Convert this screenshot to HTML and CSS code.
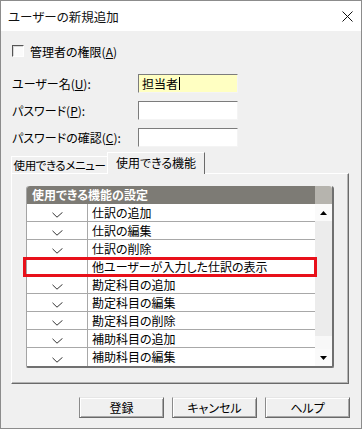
FILE: index.html
```html
<!DOCTYPE html>
<html lang="ja">
<head>
<meta charset="utf-8">
<title>ユーザーの新規追加</title>
<link rel="stylesheet" href="styles.css">
</head>
<body>
<div class="window">
  <div class="titlebar">
    <span class="title">ユーザーの新規追加</span>
    <svg class="close" width="11" height="11" viewBox="0 0 11 11"><path d="M0.5 0.5L10.5 10.5M10.5 0.5L0.5 10.5" stroke="#111" stroke-width="1" fill="none"/></svg>
  </div>
  <div class="body">
    <div class="check-row"><span class="checkbox"></span><span>管理者の権限(<u>A</u>)</span></div>
    <div class="form">
      <div class="field"><span class="label">ユーザー名(<u>U</u>):</span><div class="input active">担当者<span class="caret"></span></div></div>
      <div class="field"><span class="label">パスワード(<u>P</u>):</span><div class="input"></div></div>
      <div class="field"><span class="label">パスワードの確認(<u>C</u>):</span><div class="input"></div></div>
    </div>
    <div class="tabbox">
      <div class="tabs">
        <div class="tab">使用できるメニュー</div>
        <div class="tab active">使用できる機能</div>
      </div>
      <div class="panel">
        <div class="grid">
          <div class="grid-main">
            <div class="grid-head">使用できる機能の設定</div>
            <div class="row"><div class="c-check"><svg width="11" height="6" viewBox="0 0 11 6"><polyline points="0.5,0.8 5,5.2 10.5,0.3" fill="none" stroke="#333" stroke-width="1"/></svg></div><div class="c-name">仕訳の追加</div></div>
            <div class="row"><div class="c-check"><svg width="11" height="6" viewBox="0 0 11 6"><polyline points="0.5,0.8 5,5.2 10.5,0.3" fill="none" stroke="#333" stroke-width="1"/></svg></div><div class="c-name">仕訳の編集</div></div>
            <div class="row"><div class="c-check"><svg width="11" height="6" viewBox="0 0 11 6"><polyline points="0.5,0.8 5,5.2 10.5,0.3" fill="none" stroke="#333" stroke-width="1"/></svg></div><div class="c-name">仕訳の削除</div></div>
            <div class="row"><div class="c-check"></div><div class="c-name">他ユーザーが入力した仕訳の表示</div></div>
            <div class="row"><div class="c-check"><svg width="11" height="6" viewBox="0 0 11 6"><polyline points="0.5,0.8 5,5.2 10.5,0.3" fill="none" stroke="#333" stroke-width="1"/></svg></div><div class="c-name">勘定科目の追加</div></div>
            <div class="row"><div class="c-check"><svg width="11" height="6" viewBox="0 0 11 6"><polyline points="0.5,0.8 5,5.2 10.5,0.3" fill="none" stroke="#333" stroke-width="1"/></svg></div><div class="c-name">勘定科目の編集</div></div>
            <div class="row"><div class="c-check"><svg width="11" height="6" viewBox="0 0 11 6"><polyline points="0.5,0.8 5,5.2 10.5,0.3" fill="none" stroke="#333" stroke-width="1"/></svg></div><div class="c-name">勘定科目の削除</div></div>
            <div class="row"><div class="c-check"><svg width="11" height="6" viewBox="0 0 11 6"><polyline points="0.5,0.8 5,5.2 10.5,0.3" fill="none" stroke="#333" stroke-width="1"/></svg></div><div class="c-name">補助科目の追加</div></div>
            <div class="row"><div class="c-check"><svg width="11" height="6" viewBox="0 0 11 6"><polyline points="0.5,0.8 5,5.2 10.5,0.3" fill="none" stroke="#333" stroke-width="1"/></svg></div><div class="c-name">補助科目の編集</div></div>
          </div>
          <div class="scrollbar">
            <div class="sb-corner"></div>
            <div class="sb-btn"><svg width="7" height="4" viewBox="0 0 7 4"><polygon points="0,4 3.5,0 7,4" fill="#000"/></svg></div>
            <div class="sb-track"></div>
            <div class="sb-thumb"></div>
            <div class="sb-btn"><svg width="7" height="4" viewBox="0 0 7 4"><polygon points="0,0 7,0 3.5,4" fill="#000"/></svg></div>
          </div>
          <div class="highlight"></div>
        </div>
      </div>
    </div>
    <div class="buttons">
      <div class="btn">登録</div>
      <div class="btn">キャンセル</div>
      <div class="btn">ヘルプ</div>
    </div>
  </div>
</div>
</body>
</html>
```
FILE: styles.css
```css
* { box-sizing: border-box; margin: 0; padding: 0; }
body {
  margin: 0;
  font-family: "Noto Sans CJK JP", "Noto Sans", sans-serif;
  font-size: 12px;
  color: #000;
  font-feature-settings: "palt";
  background: #fff;
}
.window {
  width: 362px;
  height: 429px;
  border: 1px solid #8c8c8c;
  background: #f0f0f0;
  display: flex;
  flex-direction: column;
}
.titlebar {
  height: 30px;
  background: #fff;
  display: flex;
  align-items: center;
  justify-content: space-between;
  padding: 0 8px 0 7px;
  font-size: 12.5px;
  color: #111;
}
.body {
  padding: 11px 11px 0 11px;
}
.check-row {
  height: 18px;
  display: flex;
  align-items: center;
  gap: 6px;
}
.checkbox {
  width: 12px;
  height: 12px;
  border: 1px solid;
  border-color: #555 #fff #fff #555;
  box-shadow: inset 1px 1px 0 #d8d8d8;
  background: #fbfbfb;
}
.form {
  margin-top: 14px;
  display: flex;
  flex-direction: column;
  gap: 8px;
}
.field {
  display: flex;
  align-items: center;
  height: 19px;
}
.label {
  width: 126px;
  white-space: nowrap;
}
.input {
  width: 100px;
  height: 19px;
  background: #fff;
  border: 1px solid;
  border-color: #7c7c7c #f4f4f4 #f4f4f4 #7c7c7c;
  display: flex;
  align-items: center;
  padding-left: 3px;
  line-height: 17px;
}
.input.active {
  background: #ffffc2;
}
.caret {
  display: inline-block;
  width: 1px;
  height: 13px;
  background: #000;
  margin-left: 1px;
}
.tabbox {
  margin-top: 5px;
  margin-left: -1px;
}
.tabs {
  display: flex;
  align-items: flex-end;
  height: 21px;
}
.tab {
  width: 96px;
  height: 17px;
  border-left: 1px solid #fff;
  border-top: 1px solid #fff;
  text-align: center;
  line-height: 16px;
  white-space: nowrap;
  font-size: 11.5px;
  letter-spacing: -0.4px;
}
.tab.active {
  width: 98px;
  height: 22px;
  margin-bottom: -1px;
  position: relative;
  z-index: 1;
  background: #f0f0f0;
  border-right: 1px solid #6a6a6a;
  line-height: 19px;
  font-size: 12px;
  letter-spacing: 0;
}
.panel {
  width: 338px;
  height: 211px;
  border: 1px solid;
  border-color: #fff #6a6a6a #6a6a6a #fff;
  box-shadow: inset -1px -1px 0 #b4b4b4;
  padding: 12px 0 0 14px;
}
.grid {
  position: relative;
  width: 308px;
  display: flex;
  border-left: 1px solid #a4a4a4;
  border-right: 2px solid #707070;
  border-bottom: 2px solid #707070;
  border-radius: 3px 3px 2px 2px;
  background: #fff;
}
.grid-main {
  flex: 1;
  display: flex;
  flex-direction: column;
}
.grid-head {
  height: 18px;
  background: #7d7b75;
  color: #fff;
  font-weight: bold;
  padding-left: 5px;
  line-height: 18px;
  border-top-left-radius: 3px;
}
.row {
  height: 18px;
  display: flex;
  border-bottom: 1px solid #a8a8a8;
}
.row:last-child { border-bottom: none; }
.c-check {
  width: 61px;
  border-right: 1px solid #a8a8a8;
  display: flex;
  justify-content: center;
  align-items: flex-end;
  padding-bottom: 3px;
}
.c-name {
  padding-left: 4px;
  line-height: 17px;
  white-space: nowrap;
}
.scrollbar {
  width: 17px;
  display: flex;
  flex-direction: column;
  background: #ececec;
}
.sb-corner {
  height: 18px;
  background: #b6b4ae;
  border-top-right-radius: 3px;
}
.sb-btn {
  height: 17px;
  display: flex;
  align-items: center;
  justify-content: center;
  background: #fafafa;
}
.sb-track {
  flex: 1;
  background: #ececec;
}
.sb-thumb {
  height: 13px;
  background: #f8f8f8;
}
.highlight {
  position: absolute;
  left: -4px;
  top: 71px;
  width: 294px;
  height: 20px;
  border: 3px solid #e8101a;
}
.buttons {
  margin-top: 13px;
  display: flex;
  justify-content: flex-end;
  gap: 8px;
}
.btn {
  width: 85px;
  height: 21px;
  border: 1px solid;
  border-color: #e6e6e6 #696969 #696969 #8a8a8a;
  box-shadow: inset 1px 1px 0 #fff, inset -1px -1px 0 #a8a8a8;
  text-align: center;
  line-height: 19px;
  background: #f0f0f0;
}
```
